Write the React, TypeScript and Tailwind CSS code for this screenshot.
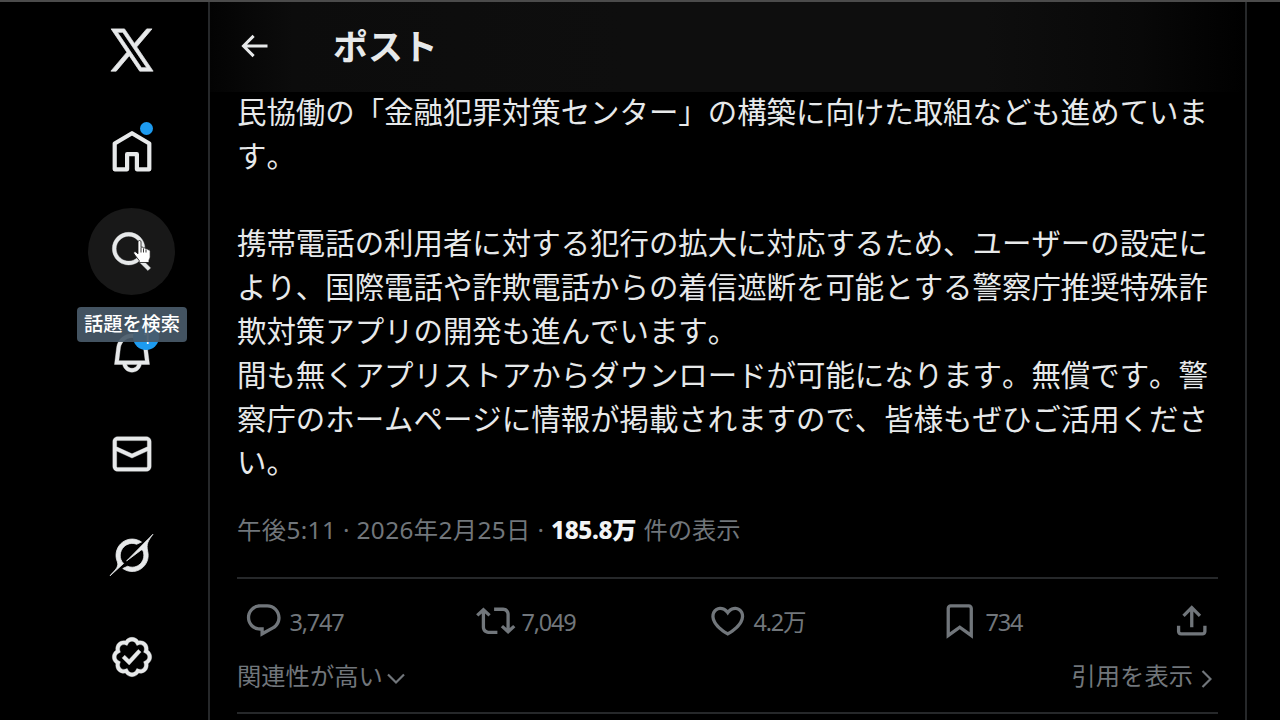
import type { ReactNode } from 'react';

const paths = {
  x: 'M21.742 21.75l-7.563-11.179 7.056-8.321h-2.456l-5.691 6.714-4.54-6.714H2.359l7.29 10.776L2.25 21.75h2.456l6.035-7.118 4.818 7.118h6.191-.008zM7.739 3.818L18.81 20.182h-2.447L5.29 3.818h2.447z',
  search:
    'M10.25 3.75c-3.59 0-6.5 2.91-6.5 6.5s2.91 6.5 6.5 6.5c1.795 0 3.419-.726 4.596-1.904 1.178-1.177 1.904-2.801 1.904-4.596 0-3.59-2.91-6.5-6.5-6.5zm-8.5 6.5c0-4.694 3.806-8.5 8.5-8.5s8.5 3.806 8.5 8.5c0 1.986-.682 3.815-1.824 5.262l4.781 4.781-1.414 1.414-4.781-4.781c-1.447 1.142-3.276 1.824-5.262 1.824-4.694 0-8.5-3.806-8.5-8.5z',
  bell: 'M19.993 9.042C19.48 5.017 16.054 2 11.996 2s-7.49 3.021-7.999 7.051L2.866 18H7.1c.463 2.282 2.481 4 4.9 4s4.437-1.718 4.9-4h4.236l-1.143-8.958zM12 20c-1.306 0-2.417-.835-2.829-2h5.658c-.412 1.165-1.523 2-2.829 2zm-6.866-4l.847-6.698C6.364 6.272 8.941 4 11.996 4s5.627 2.268 6.013 5.295L18.864 16H5.134z',
  mail: 'M1.998 5.5c0-1.381 1.119-2.5 2.5-2.5h15c1.381 0 2.5 1.119 2.5 2.5v13c0 1.381-1.119 2.5-2.5 2.5h-15c-1.381 0-2.5-1.119-2.5-2.5v-13zm2.5-.5c-.276 0-.5.224-.5.5v2.764l8 3.638 8-3.636V5.5c0-.276-.224-.5-.5-.5h-15zm15.5 5.463l-8 3.636-8-3.638V18.5c0 .276.224.5.5.5h15c.276 0 .5-.224.5-.5v-8.037z',
  grok: 'M12.745 20.54l10.97-8.19c.539-.4 1.307-.244 1.564.38 1.349 3.288.746 7.241-1.938 9.955-2.683 2.714-6.417 3.31-9.83 1.954l-3.728 1.745c5.347 3.697 11.84 2.782 15.898-1.324 3.219-3.255 4.216-7.692 3.284-11.693l.008.009c-1.351-5.878.332-8.227 3.782-13.031L33 0l-4.54 4.59v-.014L12.743 20.544m-2.263 1.987c-3.837-3.707-3.175-9.446.1-12.755 2.42-2.449 6.388-3.448 9.852-1.979l3.72-1.737c-.67-.49-1.53-1.017-2.515-1.387-4.455-1.854-9.789-.931-13.41 2.728-3.483 3.523-4.579 8.94-2.697 13.561 1.405 3.454-.899 5.898-3.22 8.364C1.49 30.2.666 31.074 0 32l10.478-9.466',
  verified:
    'M8.52 3.59c.8-1.1 2.04-1.84 3.48-1.84s2.68.74 3.49 1.84c1.34-.21 2.74.14 3.76 1.16s1.37 2.42 1.16 3.77c1.1.8 1.84 2.04 1.84 3.48s-.74 2.68-1.84 3.48c.21 1.34-.14 2.75-1.16 3.77s-2.42 1.37-3.76 1.16c-.8 1.1-2.05 1.84-3.49 1.84s-2.68-.74-3.48-1.84c-1.34.21-2.75-.14-3.77-1.16-1.01-1.02-1.37-2.42-1.16-3.77-1.09-.8-1.84-2.04-1.84-3.48s.75-2.68 1.84-3.48c-.21-1.35.14-2.75 1.16-3.77s2.43-1.37 3.77-1.16zm3.48.16c-.85 0-1.66.53-2.12 1.43l-.38.77-.82-.27c-.96-.32-1.91-.12-2.51.49-.6.6-.8 1.54-.49 2.51l.27.81-.77.39c-.9.46-1.43 1.27-1.43 2.12s.53 1.66 1.43 2.12l.77.39-.27.81c-.31.97-.11 1.91.49 2.51.6.61 1.55.81 2.51.49l.82-.27.38.77c.46.9 1.27 1.43 2.12 1.43s1.66-.53 2.12-1.43l.39-.77.82.27c.96.32 1.9.12 2.51-.49.6-.6.8-1.55.48-2.51l-.26-.81.76-.39c.91-.46 1.43-1.27 1.43-2.12s-.52-1.66-1.43-2.12l-.77-.39.27-.81c.32-.97.12-1.91-.48-2.51-.61-.61-1.55-.81-2.51-.49l-.82.27-.39-.77c-.46-.9-1.27-1.43-2.12-1.43zm4.74 5.68l-6.2 6.77-3.74-3.74 1.41-1.42 2.26 2.26 4.8-5.23 1.47 1.36z',
  back: 'M7.414 13l5.043 5.04-1.414 1.42L3.586 12l7.457-7.46 1.414 1.42L7.414 11H21v2H7.414z',
  reply:
    'M1.751 10c0-4.42 3.584-8 8.005-8h4.366c4.49 0 8.129 3.64 8.129 8.13 0 2.96-1.607 5.68-4.196 7.11l-8.054 4.46v-3.69h-.067c-4.49.1-8.183-3.51-8.183-8.01zm8.005-6c-3.317 0-6.005 2.69-6.005 6 0 3.37 2.77 6.08 6.138 6.01l.351-.01h1.761v2.3l5.087-2.81c1.951-1.08 3.163-3.13 3.163-5.36 0-3.39-2.744-6.13-6.129-6.13H9.756z',
  repost:
    'M4.5 3.88l4.432 4.14-1.364 1.46L5.5 7.55V16c0 1.1.896 2 2 2H13v2H7.5c-2.209 0-4-1.79-4-4V7.55L1.432 9.48.068 8.02 4.5 3.88zM16.5 6H11V4h5.5c2.209 0 4 1.79 4 4v8.45l2.068-1.93 1.364 1.46-4.432 4.14-4.432-4.14 1.364-1.46 2.068 1.93V8c0-1.1-.896-2-2-2z',
  like: 'M16.697 5.5c-1.222-.06-2.679.51-3.89 2.16l-.805 1.09-.806-1.09C9.984 6.01 8.526 5.44 7.304 5.5c-1.243.07-2.349.78-2.91 1.91-.552 1.12-.633 2.78.479 4.82 1.074 1.97 3.257 4.27 7.129 6.61 3.87-2.34 6.052-4.64 7.126-6.61 1.111-2.04 1.03-3.7.477-4.82-.561-1.13-1.666-1.84-2.908-1.91zm4.187 7.69c-1.351 2.48-4.001 5.12-8.379 7.67l-.503.3-.504-.3c-4.379-2.55-7.029-5.19-8.382-7.67-1.36-2.5-1.41-4.86-.514-6.67.887-1.79 2.647-2.91 4.601-3.01 1.651-.09 3.368.56 4.798 2.01 1.429-1.45 3.146-2.1 4.796-2.01 1.954.1 3.714 1.22 4.601 3.01.896 1.81.846 4.17-.514 6.67z',
  bookmark:
    'M4 4.5C4 3.12 5.119 2 6.5 2h11C18.881 2 20 3.12 20 4.5v18.44l-8-5.71-8 5.71V4.5zM6.5 4c-.276 0-.5.22-.5.5v14.56l6-4.29 6 4.29V4.5c0-.28-.224-.5-.5-.5h-11z',
  share:
    'M12 2.59l5.7 5.7-1.41 1.42L13 6.41V16h-2V6.41l-3.3 3.3-1.41-1.42L12 2.59zM21 15l-.02 3.51c0 1.38-1.12 2.49-2.5 2.49H5.5C4.11 21 3 19.88 3 18.5V15h2v3.5c0 .28.22.5.5.5h12.98c.28 0 .5-.22.5-.5L19 15h2z',
};

type IconProps = {
  name: keyof typeof paths;
  className: string;
  viewBox?: string;
};

function Icon({ name, className, viewBox = '0 0 24 24' }: IconProps) {
  return (
    <svg viewBox={viewBox} className={`shrink-0 fill-current ${className}`} aria-hidden>
      <path d={paths[name]} />
    </svg>
  );
}

function NavItem({ active, children }: { active?: boolean; children: ReactNode }) {
  return (
    <a
      className={`relative flex size-[87px] shrink-0 items-center justify-center rounded-full ${
        active ? 'bg-[#181818]' : ''
      }`}
    >
      {children}
    </a>
  );
}

function HandCursor() {
  return (
    <svg
      viewBox="0 0 18 24"
      className="absolute left-[45px] top-[32px] h-[24px] w-[18px]"
      aria-hidden
    >
      <path
        d="M5 1.8c0-1.700 3-1.700 3 0v5.500c1-.5 2.200-.2 2.500.7 1-.4 2.100 0 2.400.9 1-.4 2 0 2.300.9 1.200-.2 2 .4 2 1.600v5c0 1.800-.8 2.600-1.200 3.800v2.300H6.200v-2C4.600 18.500 2.500 16 1 13.800c-1-1.600.6-2.800 1.900-1.800L5 13.800z"
        fill="#fff"
        stroke="#111"
        strokeWidth="0.8"
      />
      <path d="M8 7.500v5M10.500 8.500v4M13 9.500v3" stroke="#222" strokeWidth="0.9" />
    </svg>
  );
}

function Sidebar() {
  return (
    <nav className="flex w-[210px] shrink-0 flex-col gap-[14.2px] border-r-2 border-[#26282a] pl-[88px] pt-[4px] text-[#e7e9ea]">
      <NavItem>
        <Icon name="x" className="size-[52px] stroke-current stroke-[0.35]" />
      </NavItem>
      <NavItem>
        <svg viewBox="0 0 46 46" className="size-[46px]" aria-hidden>
          <path
            d="M5.7 41.3V15.5L23 5.2l17.3 10.3v25.8H27.900V26.200h-9.800v15.100z"
            fill="none"
            stroke="currentColor"
            strokeWidth="4.2"
            strokeLinejoin="round"
          />
        </svg>
        <span className="absolute left-[52px] top-[15px] size-[13px] rounded-full bg-[#1d9bf0]" />
      </NavItem>
      <NavItem active>
        <Icon name="search" className="size-[46px] stroke-current stroke-[0.2]" />
        <HandCursor />
        <span className="absolute -left-[11px] top-[99px] z-10 flex h-[35px] w-[110px] items-center justify-center whitespace-nowrap rounded-[4px] bg-[#495a69]/92 text-[19.2px] font-medium text-white">
          話題を検索
        </span>
      </NavItem>
      <NavItem>
        <Icon name="bell" className="size-[46px] stroke-current stroke-[0.2]" />
        <span className="absolute left-[45px] top-[14px] flex size-[26px] items-center justify-center rounded-full bg-[#1d9bf0] pl-[2px] pt-[2px] text-[17px] leading-none text-white">
          1
        </span>
      </NavItem>
      <NavItem>
        <Icon name="mail" className="size-[46px] stroke-current stroke-[0.2]" />
      </NavItem>
      <NavItem>
        <Icon
          name="grok"
          viewBox="0 0 33 32"
          className="h-[42px] w-[43px] overflow-visible stroke-current stroke-[0.6]"
        />
      </NavItem>
      <NavItem>
        <Icon name="verified" className="size-[46px] stroke-current stroke-[0.2]" />
      </NavItem>
    </nav>
  );
}

const body = [
  '民協働の「金融犯罪対策センター」の構築に向けた取組なども進めていま',
  'す。',
  '',
  '携帯電話の利用者に対する犯行の拡大に対応するため、ユーザーの設定に',
  'より、国際電話や詐欺電話からの着信遮断を可能とする警察庁推奨特殊詐',
  '欺対策アプリの開発も進んでいます。',
  '間も無くアプリストアからダウンロードが可能になります。無償です。警',
  '察庁のホームページに情報が掲載されますので、皆様もぜひご活用くださ',
  'い。',
];

type ActionProps = {
  name: keyof typeof paths;
  count: string;
  className: string;
};

function Action({ name, count, className }: ActionProps) {
  return (
    <div className={`flex shrink-0 items-center gap-[6px] ${className}`}>
      <Icon name={name} className="size-[39.5px]" />
      <span className="whitespace-nowrap pt-[2px] text-[23.5px] tracking-[-1.2px]">{count}</span>
    </div>
  );
}

function Post() {
  return (
    <article className="pl-[27px] pr-[27px] text-[#71767b]">
      <div className="-mt-px text-[29.43px] leading-[43.8px] text-[#e7e9ea] [font-kerning:none] [text-spacing-trim:space-all]">
        {body.map((line, i) => (
          <p key={i} className="h-[43.8px] whitespace-nowrap">
            {line}
          </p>
        ))}
      </div>

      <div className="flex h-[92px] items-center whitespace-pre pb-[2px] text-[24.3px]">
        <span className="tracking-[0.4px]">午後5:11 · 2026年2月25日 · </span>
        <span className="font-extrabold tracking-[-0.4px] text-[#f2f4f5]">185.8万</span>
        <span className="pl-px"> 件の表示</span>
      </div>

      <div className="flex h-[86px] items-center border-t-2 border-[#26282a]">
        <Action name="reply" count="3,747" className="w-[233px] pl-[7px]" />
        <Action name="repost" count="7,049" className="w-[231px] pl-[6px]" />
        <Action name="like" count="4.2万" className="w-[232px] pl-[7px]" />
        <Action name="bookmark" count="734" className="pl-[7px]" />
        <Icon name="share" className="ml-auto mr-[7px] size-[39.5px]" />
      </div>

      <div className="-mt-px flex h-[52px] items-start justify-between border-b-2 border-[#26282a] text-[24.3px] leading-[28px]">
        <div className="flex items-center gap-1">
          <span>関連性が高い</span>
          <svg viewBox="0 0 18 12" className="mt-[6px] h-[12px] w-[18px]" aria-hidden>
            <path d="M1 1.5l8 8 8-8" fill="none" stroke="currentColor" strokeWidth="2.2" />
          </svg>
        </div>
        <div className="flex items-center gap-2 pr-[6px]">
          <span>引用を表示</span>
          <svg viewBox="0 0 11 18" className="mt-[6px] h-[18px] w-[11px]" aria-hidden>
            <path d="M1.5 1l8 8-8 8" fill="none" stroke="currentColor" strokeWidth="2.2" />
          </svg>
        </div>
      </div>
    </article>
  );
}

export default function App() {
  return (
    <div className="flex h-[720px] w-[1280px] overflow-hidden border-t-2 border-[#4b4b4b] bg-black font-['Noto_Sans','Noto_Sans_CJK_JP',sans-serif]">
      <Sidebar />
      <main className="w-[1037px] shrink-0 border-r-2 border-[#26282a]">
        <header className="flex h-[90px] items-center bg-[linear-gradient(90deg,#030303,#0c0c0c_8%,#0e0e0e_40%,#0e0e0e_75%,#080808_90%,#000)] pl-[26px] text-[#e7e9ea]">
          <Icon name="back" className="mb-[2px] size-[36px]" />
          <h1 className="ml-[61px] text-[34.9px] font-bold leading-none">ポスト</h1>
        </header>
        <Post />
      </main>
    </div>
  );
}
